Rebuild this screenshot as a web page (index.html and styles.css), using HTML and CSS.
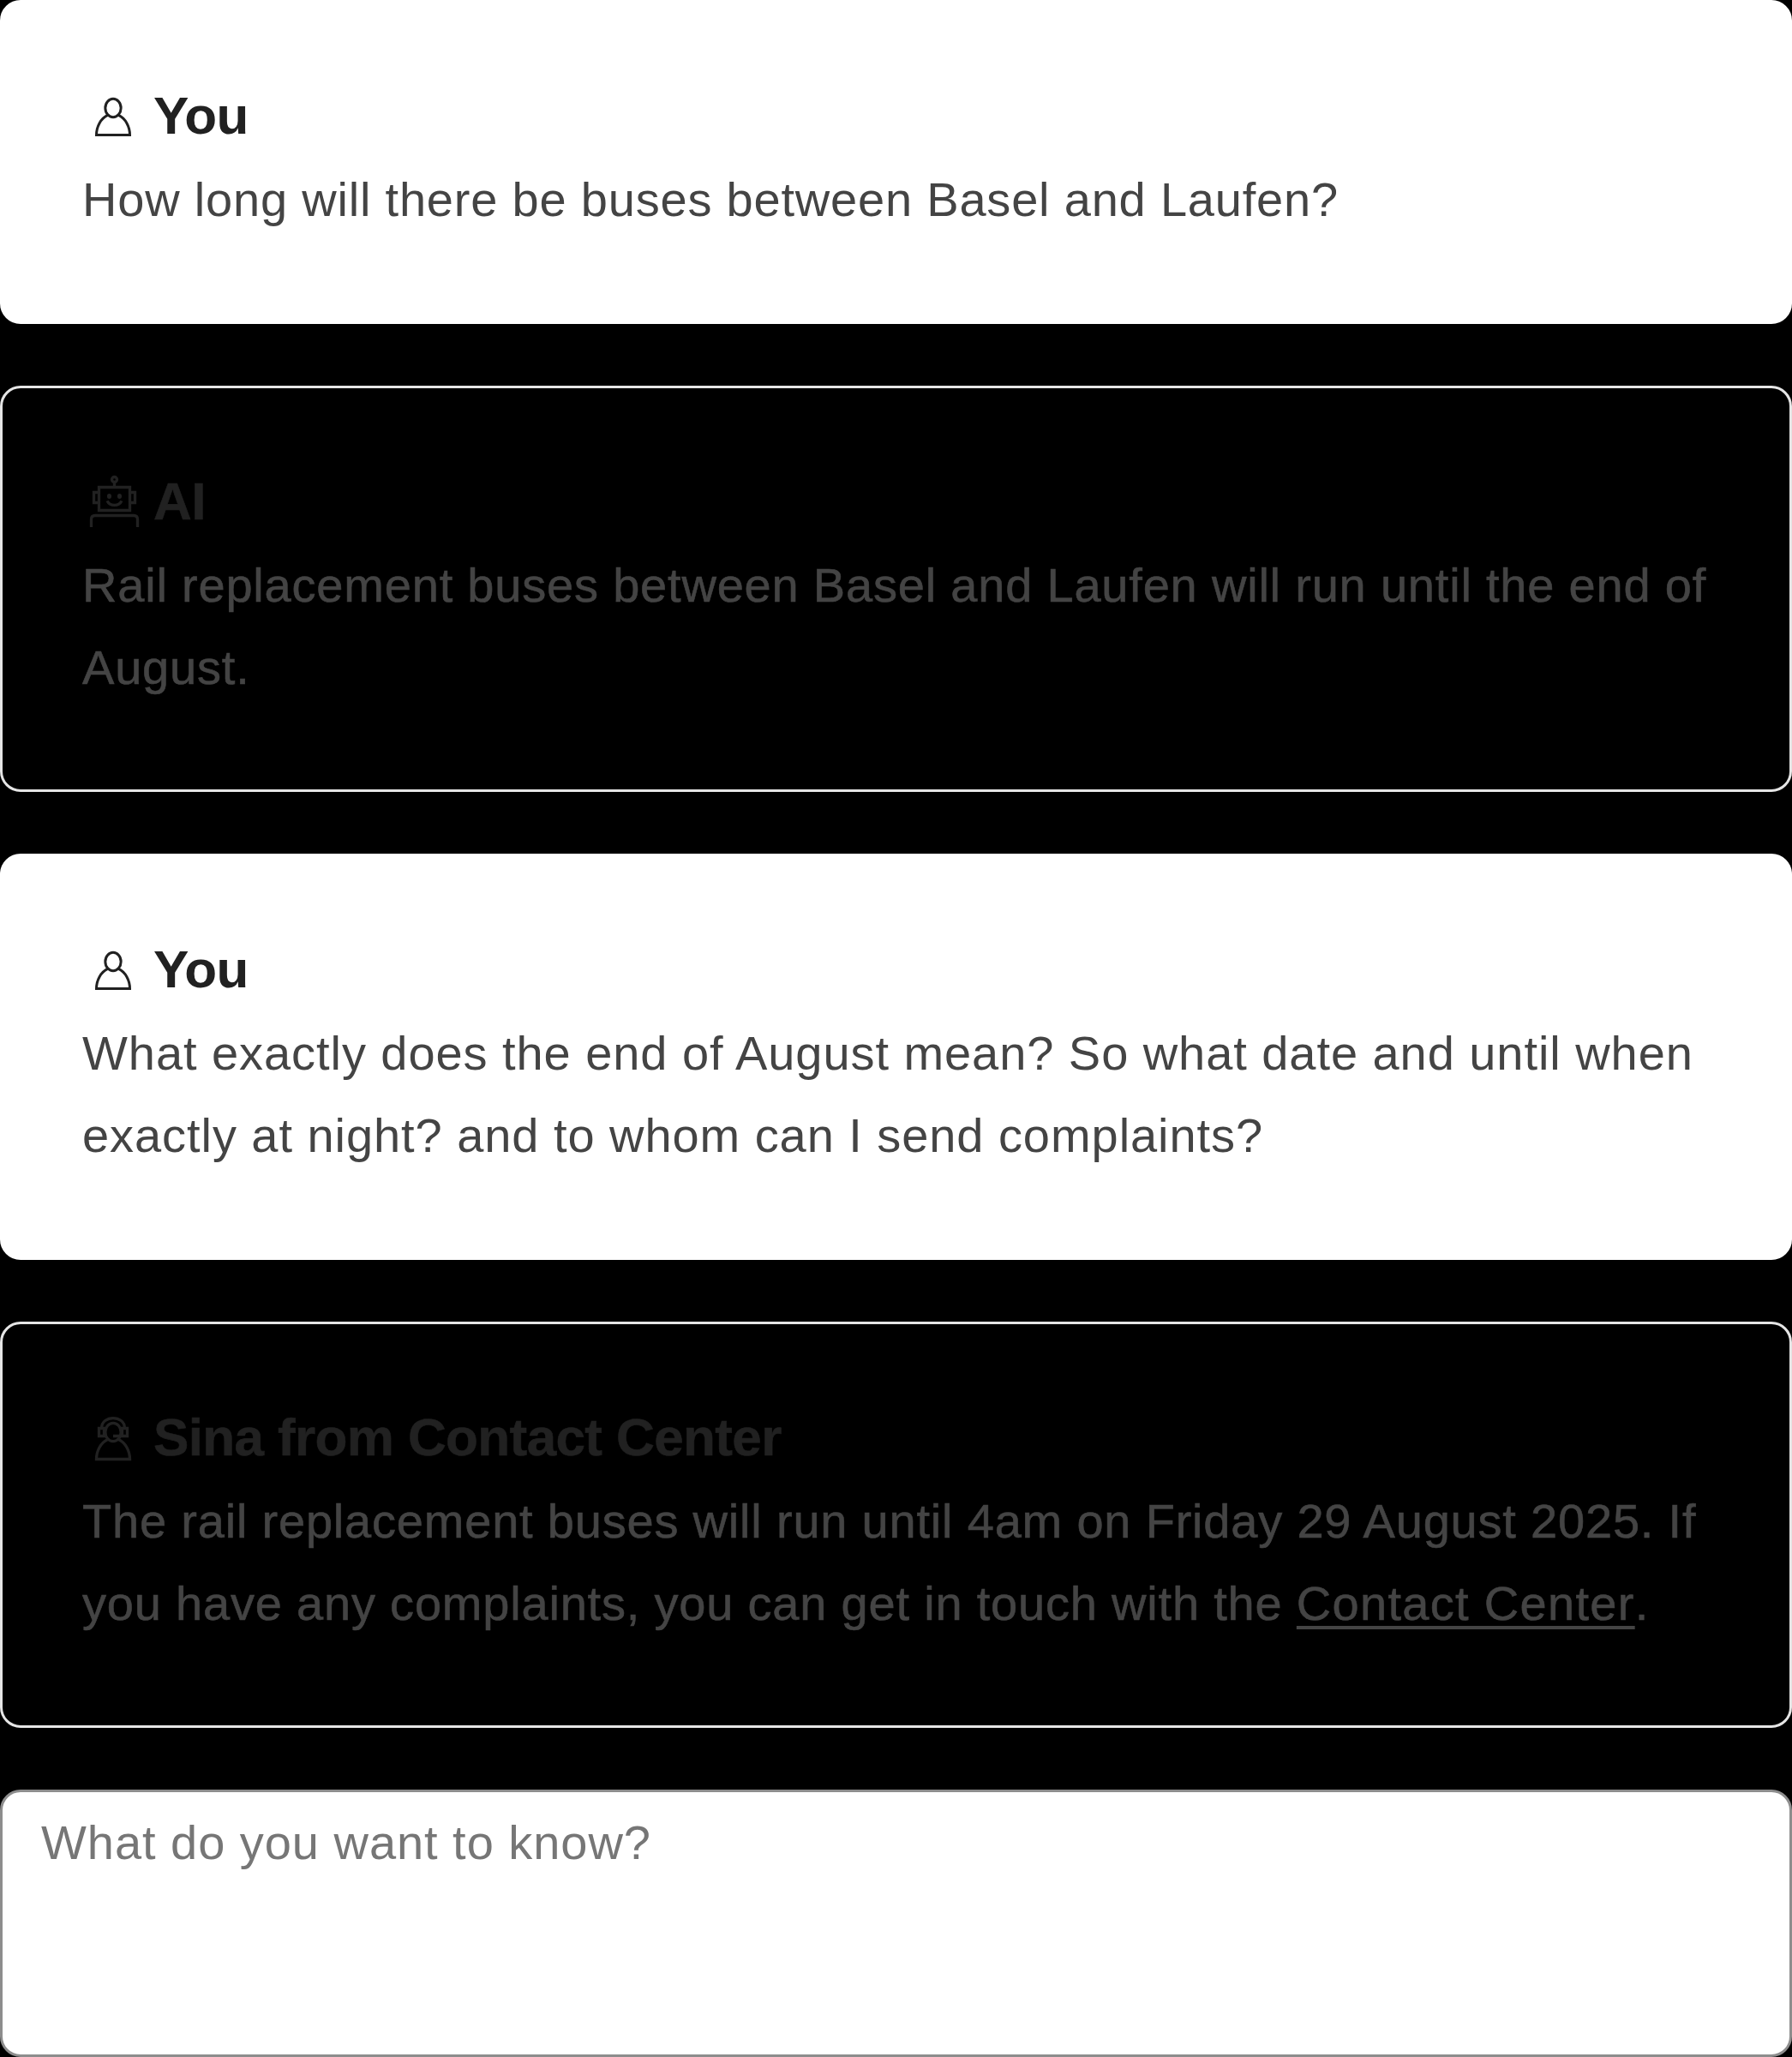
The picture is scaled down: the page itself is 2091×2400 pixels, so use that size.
FILE: index.html
```html
<!DOCTYPE html>
<html lang="en">
<head>
<meta charset="utf-8">
<title>Chat</title>
<link rel="stylesheet" href="styles.css">
</head>
<body>
<main class="chat">
  <article class="message message--user">
    <h2 class="message__author">
      <svg class="icon" viewBox="0 0 24 24"><ellipse cx="12" cy="9" rx="3.05" ry="3.55"/><path d="M9.9 11.8C7.2 13 5.5 16.3 5.5 19.5H18.5C18.5 16.3 16.8 13 14.1 11.8"/></svg>
      <span>You</span>
    </h2>
    <p class="message__text message__text--tight">How long will there be buses between Basel and Laufen?</p>
  </article>
  <article class="message message--reply">
    <h2 class="message__author">
      <svg class="icon" viewBox="0 0 24 24"><path d="M6.5 6.5H18.5V15.5H6.5ZM6.5 8.5H4.5V12.5H6.5M18.5 8.5H20.5V12.5H18.5M12.5 4.5V6.5M3.5 22V19Q3.5 17.5 5 17.5H20Q21.5 17.5 21.5 19V22M9.7 11.8C10.7 14.05 14.3 14.05 15.3 11.8"/><circle cx="12.5" cy="3.5" r="1"/><ellipse class="icon__dot" cx="10.5" cy="10" rx=".85" ry="1"/><ellipse class="icon__dot" cx="14.5" cy="10" rx=".85" ry="1"/></svg>
      <span>AI</span>
    </h2>
    <p class="message__text message__text--tight">Rail replacement buses between Basel and Laufen will run until the end of<br>August.</p>
  </article>
  <article class="message message--user">
    <h2 class="message__author">
      <svg class="icon" viewBox="0 0 24 24"><ellipse cx="12" cy="9" rx="3.05" ry="3.55"/><path d="M9.9 11.8C7.2 13 5.5 16.3 5.5 19.5H18.5C18.5 16.3 16.8 13 14.1 11.8"/></svg>
      <span>You</span>
    </h2>
    <p class="message__text">What exactly does the end of August mean? So what date and until when<br>exactly at night? and to whom can I send complaints?</p>
  </article>
  <article class="message message--reply">
    <h2 class="message__author">
      <svg class="icon" viewBox="0 0 24 24"><ellipse cx="12" cy="10" rx="3.05" ry="3.55"/><path d="M9.9 12.8C7.2 14 5.5 17.3 5.5 20.5H18.5C18.5 17.3 16.8 14 14.1 12.8M7.5 8.5C7.5 3.2 16.5 3.2 16.5 8.5M6.5 8.5H8.5V11.5H6.5ZM15.5 8.5H17.5V11.5H15.5ZM15.5 11.5H12"/></svg>
      <span>Sina from Contact Center</span>
    </h2>
    <p class="message__text message__text--tight">The rail replacement buses will run until 4am on Friday 29 August 2025. If<br>you have any complaints, you can get in touch with the <a class="link" href="#">Contact Center</a>.</p>
  </article>
  <textarea class="prompt" placeholder="What do you want to know?"></textarea>
</main>
</body>
</html>
```
FILE: styles.css
```css
* {
  box-sizing: border-box;
}

body {
  margin: 0;
  background: #000;
  font-family: "Liberation Sans", Arial, Helvetica, sans-serif;
}

.chat {
  display: flex;
  flex-direction: column;
  gap: 72px;
  height: 2400px;
}

.message {
  padding: 93px 60px 94px 93px;
  border: 3px solid #e5e5e5;
  border-radius: 24px;
  color: #444;
}

.message--user {
  background: #fff;
  border-color: #fff;
}

.message--reply {
  -webkit-text-stroke: 0.6px currentColor;
}

.message__author {
  display: flex;
  align-items: center;
  gap: 11px;
  height: 78px;
  margin: 0 0 11px;
  color: #212121;
  font-size: 62px;
  font-weight: 700;
  line-height: 78px;
  letter-spacing: -0.62px;
}

.icon {
  flex: none;
  width: 72px;
  height: 72px;
  fill: none;
  stroke: currentColor;
  stroke-width: 1;
}

.message--reply .icon {
  stroke-width: 1.1;
}

.icon__dot {
  fill: currentColor;
  stroke: none;
}

.message__text {
  margin: 0;
  font-size: 56px;
  line-height: 96px;
  letter-spacing: 0.94px;
  white-space: nowrap;
}

.message__text--tight {
  letter-spacing: 0.8px;
}

.link {
  color: inherit;
  letter-spacing: 1.3px;
  text-decoration: underline;
  text-decoration-thickness: 4px;
  text-underline-offset: 7px;
  text-decoration-skip-ink: none;
}

.prompt {
  display: block;
  flex: 1;
  width: 100%;
  margin: 0;
  padding: 11px 45px;
  border: 3px solid #8d8d8d;
  border-radius: 24px;
  background: #fff;
  font: 56px/96px "Liberation Sans", Arial, Helvetica, sans-serif;
  letter-spacing: 0.96px;
  resize: none;
  outline: 0;
}

.prompt::placeholder {
  color: #767676;
}
```
